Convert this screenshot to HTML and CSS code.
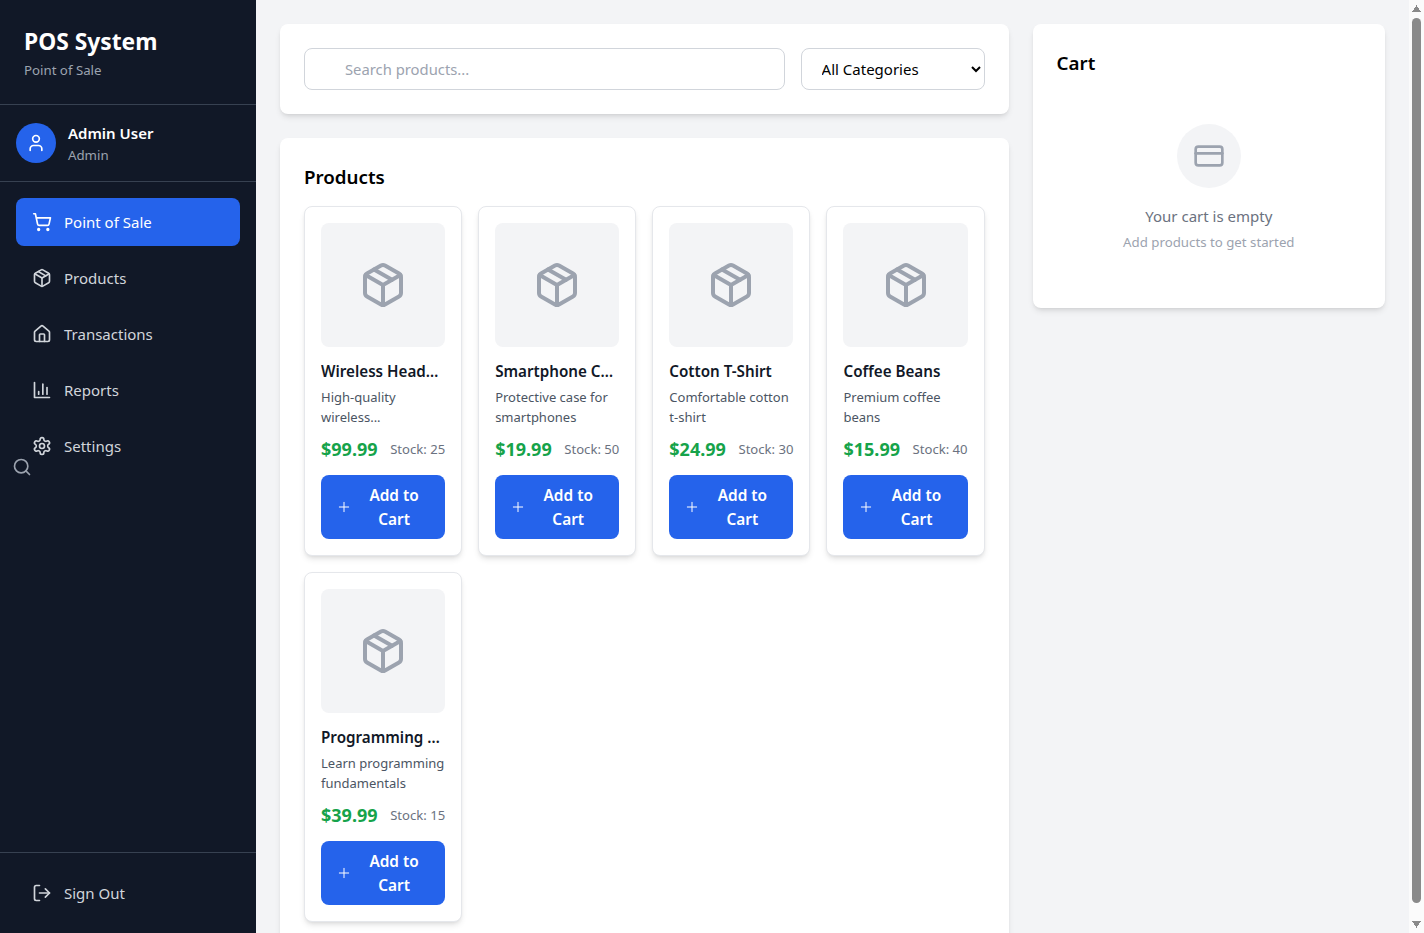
FILE: index.html
```html
<!DOCTYPE html>
<html lang="en">
<head>
<meta charset="utf-8">
<title>POS System</title>
<link rel="stylesheet" href="styles.css">
</head>
<body>
<svg class="sprite" aria-hidden="true">
  <symbol id="i-package" viewBox="0 0 24 24"><path d="m7.5 4.27 9 5.15"/><path d="M21 8a2 2 0 0 0-1-1.73l-7-4a2 2 0 0 0-2 0l-7 4A2 2 0 0 0 3 8v8a2 2 0 0 0 1 1.73l7 4a2 2 0 0 0 2 0l7-4A2 2 0 0 0 21 16Z"/><path d="m3.3 7 8.7 5 8.7-5"/><path d="M12 22V12"/></symbol>
  <symbol id="i-plus" viewBox="0 0 24 24"><path d="M5 12h14"/><path d="M12 5v14"/></symbol>
</svg>
<div class="app">
  <aside class="sidebar">
    <svg class="icon stray-search" viewBox="0 0 24 24"><circle cx="11" cy="11" r="8"/><path d="m21 21-4.3-4.3"/></svg>
    <header class="brand">
      <h1>POS System</h1>
      <p>Point of Sale</p>
    </header>
    <div class="user">
      <div class="avatar"><svg class="icon" viewBox="0 0 24 24"><path d="M19 21v-2a4 4 0 0 0-4-4H9a4 4 0 0 0-4 4v2"/><circle cx="12" cy="7" r="4"/></svg></div>
      <div>
        <div class="user-name">Admin User</div>
        <div class="user-role">Admin</div>
      </div>
    </div>
    <nav class="nav">
      <a class="nav-item active"><svg class="icon" viewBox="0 0 24 24"><circle cx="8" cy="21" r="1"/><circle cx="19" cy="21" r="1"/><path d="M2.05 2.05h2l2.66 12.42a2 2 0 0 0 2 1.58h9.78a2 2 0 0 0 1.95-1.57l1.65-7.43H5.12"/></svg>Point of Sale</a>
      <a class="nav-item"><svg class="icon"><use href="#i-package"/></svg>Products</a>
      <a class="nav-item"><svg class="icon" viewBox="0 0 24 24"><path d="M15 21v-8a1 1 0 0 0-1-1h-4a1 1 0 0 0-1 1v8"/><path d="M3 10a2 2 0 0 1 .709-1.528l7-5.999a2 2 0 0 1 2.582 0l7 5.999A2 2 0 0 1 21 10v9a2 2 0 0 1-2 2H5a2 2 0 0 1-2-2z"/></svg>Transactions</a>
      <a class="nav-item"><svg class="icon" viewBox="0 0 24 24"><path d="M3 3v18h18"/><path d="M18 17V9"/><path d="M13 17V5"/><path d="M8 17v-3"/></svg>Reports</a>
      <a class="nav-item"><svg class="icon" viewBox="0 0 24 24"><path d="M12.22 2h-.44a2 2 0 0 0-2 2v.18a2 2 0 0 1-1 1.73l-.43.25a2 2 0 0 1-2 0l-.15-.08a2 2 0 0 0-2.73.73l-.22.38a2 2 0 0 0 .73 2.73l.15.1a2 2 0 0 1 1 1.72v.51a2 2 0 0 1-1 1.74l-.15.09a2 2 0 0 0-.73 2.73l.22.38a2 2 0 0 0 2.73.73l.15-.08a2 2 0 0 1 2 0l.43.25a2 2 0 0 1 1 1.73V20a2 2 0 0 0 2 2h.44a2 2 0 0 0 2-2v-.18a2 2 0 0 1 1-1.73l.43-.25a2 2 0 0 1 2 0l.15.08a2 2 0 0 0 2.73-.73l.22-.39a2 2 0 0 0-.73-2.73l-.15-.08a2 2 0 0 1-1-1.74v-.5a2 2 0 0 1 1-1.74l.15-.09a2 2 0 0 0 .73-2.73l-.22-.38a2 2 0 0 0-2.73-.73l-.15.08a2 2 0 0 1-2 0l-.43-.25a2 2 0 0 1-1-1.73V4a2 2 0 0 0-2-2z"/><circle cx="12" cy="12" r="3"/></svg>Settings</a>
    </nav>
    <div class="sidebar-foot">
      <a class="nav-item"><svg class="icon" viewBox="0 0 24 24"><path d="M9 21H5a2 2 0 0 1-2-2V5a2 2 0 0 1 2-2h4"/><path d="m16 17 5-5-5-5"/><path d="M21 12H9"/></svg>Sign Out</a>
    </div>
  </aside>

  <main class="main">
    <div class="left">
      <section class="card filters">
        <input class="search" type="text" placeholder="Search products...">
        <select class="category"><option>All Categories</option></select>
      </section>
      <section class="card products">
        <h2>Products</h2>
        <div class="grid">
          <article class="product">
            <div class="thumb"><svg class="icon"><use href="#i-package"/></svg></div>
            <h3>Wireless Headphones</h3>
            <p class="desc">High-quality wireless...</p>
            <div class="meta"><span class="price">$99.99</span><span class="stock">Stock: 25</span></div>
            <button class="add"><svg class="icon"><use href="#i-plus"/></svg><span>Add to Cart</span></button>
          </article>
          <article class="product">
            <div class="thumb"><svg class="icon"><use href="#i-package"/></svg></div>
            <h3>Smartphone Case</h3>
            <p class="desc">Protective case for smartphones</p>
            <div class="meta"><span class="price">$19.99</span><span class="stock">Stock: 50</span></div>
            <button class="add"><svg class="icon"><use href="#i-plus"/></svg><span>Add to Cart</span></button>
          </article>
          <article class="product">
            <div class="thumb"><svg class="icon"><use href="#i-package"/></svg></div>
            <h3>Cotton T-Shirt</h3>
            <p class="desc">Comfortable cotton t-shirt</p>
            <div class="meta"><span class="price">$24.99</span><span class="stock">Stock: 30</span></div>
            <button class="add"><svg class="icon"><use href="#i-plus"/></svg><span>Add to Cart</span></button>
          </article>
          <article class="product">
            <div class="thumb"><svg class="icon"><use href="#i-package"/></svg></div>
            <h3>Coffee Beans</h3>
            <p class="desc">Premium coffee beans</p>
            <div class="meta"><span class="price">$15.99</span><span class="stock">Stock: 40</span></div>
            <button class="add"><svg class="icon"><use href="#i-plus"/></svg><span>Add to Cart</span></button>
          </article>
          <article class="product">
            <div class="thumb"><svg class="icon"><use href="#i-package"/></svg></div>
            <h3>Programming Book</h3>
            <p class="desc">Learn programming fundamentals</p>
            <div class="meta"><span class="price">$39.99</span><span class="stock">Stock: 15</span></div>
            <button class="add"><svg class="icon"><use href="#i-plus"/></svg><span>Add to Cart</span></button>
          </article>
        </div>
      </section>
    </div>
    <aside class="card cart">
      <h2>Cart</h2>
      <div class="empty">
        <div class="empty-circle"><svg class="icon" viewBox="0 0 24 24"><rect width="20" height="14" x="2" y="5" rx="2"/><line x1="2" x2="22" y1="10" y2="10"/></svg></div>
        <p class="empty-title">Your cart is empty</p>
        <p class="empty-sub">Add products to get started</p>
      </div>
    </aside>
  </main>

  <div class="scrollbar" aria-hidden="true">
    <div class="arrow arrow-up"></div>
    <div class="track"><div class="thumb-bar"></div></div>
    <div class="arrow arrow-down"></div>
  </div>
</div>
</body>
</html>
```

FILE: styles.css
```css
* { box-sizing: border-box; }
html, body { height: 100%; overflow: hidden; }
body { margin: 0; background: #f3f4f6; font-family: "Noto Sans", "Liberation Sans", sans-serif; font-size: 15px; line-height: 24px; color: #000; }
h1, h2, h3, p { margin: 0; }
.sprite { display: none; }
.icon { display: block; flex: none; fill: none; stroke: currentColor; stroke-width: 2; stroke-linecap: round; stroke-linejoin: round; width: 20px; height: 20px; }

.app { display: flex; align-items: flex-start; height: 100vh; overflow: hidden; }

.scrollbar { flex: none; width: 15px; height: 100vh; background: #fbfbfb; display: flex; flex-direction: column; align-items: center; }
.arrow { flex: none; width: 9px; height: 17px; }
.arrow-up { background: conic-gradient(from 147deg at 50% 0, #8a8a8a 66deg, transparent 0) 0 5px / 9px 7px no-repeat; }
.arrow-down { background: conic-gradient(from 327deg at 50% 100%, #8a8a8a 66deg, transparent 0) 0 5px / 9px 7px no-repeat; }
.track { flex: 1; width: 9px; padding-top: 1px; }
.thumb-bar { height: 885px; background: #8a8a8a; border-radius: 5px; }

.sidebar { position: relative; flex: none; width: 256px; height: 100vh; background: #111827; color: #fff; display: flex; flex-direction: column; }
.stray-search { position: absolute; left: 12px; top: 50%; transform: translateY(-50%); color: #9ca3af; }
.brand { padding: 24px; border-bottom: 1px solid #374151; }
.brand h1 { font-size: 22.8px; line-height: 36px; font-weight: 700; }
.brand p { font-size: 13.25px; line-height: 20px; color: #9ca3af; }
.user { display: flex; align-items: center; gap: 12px; padding: 16px; border-bottom: 1px solid #374151; }
.avatar { width: 40px; height: 40px; border-radius: 50%; background: #2563eb; display: flex; align-items: center; justify-content: center; }
.user-name { font-weight: 600; }
.user-role { font-size: 13.25px; line-height: 20px; color: #9ca3af; }
.nav { flex: 1; padding: 16px; display: flex; flex-direction: column; gap: 8px; }
.nav-item { display: flex; align-items: center; gap: 12px; padding: 12px 16px; border-radius: 8px; color: #d1d5db; }
.nav-item.active { background: #2563eb; color: #fff; }
.sidebar-foot { padding: 16px; border-top: 1px solid #374151; }

.main { flex: 1; min-width: 0; display: grid; grid-template-columns: minmax(0, 1fr) 352.4px; gap: 24px; align-items: start; padding: 24px 24px 0; }
.left { display: flex; flex-direction: column; gap: 24px; }
.card { background: #fff; border-radius: 8px; padding: 24px; box-shadow: 0 4px 6px -1px rgba(0,0,0,.1), 0 2px 4px -2px rgba(0,0,0,.1); }
.filters { display: flex; gap: 16px; }
.search { flex: 1; min-width: 0; height: 42px; padding: 8px 16px 8px 40px; border: 1px solid #d1d5db; border-radius: 8px; font: inherit; font-size: 14.8px; background: #fff; }
.search::placeholder { color: #9ca3af; opacity: 1; }
.category { flex: none; width: 184px; height: 42px; padding: 8px 16px; border: 1px solid #d1d5db; border-radius: 8px; font: inherit; background: #fff; color: #000; }
h2 { font-size: 18.75px; line-height: 30px; font-weight: 600; margin-bottom: 14px; }
.grid { display: grid; grid-template-columns: repeat(4, minmax(0, 1fr)); gap: 16px; }
.product { border: 1px solid #e5e7eb; border-radius: 8px; padding: 16px; background: #fff; box-shadow: 0 4px 6px -1px rgba(0,0,0,.1), 0 2px 4px -2px rgba(0,0,0,.1); }
.thumb { height: 124px; margin-bottom: 12px; background: #f3f4f6; border-radius: 8px; color: #9ca3af; display: flex; align-items: center; justify-content: center; }
.thumb .icon { width: 48px; height: 48px; }
h3 { font-size: 15.2px; line-height: 24px; font-weight: 600; color: #111827; white-space: nowrap; overflow: hidden; text-overflow: ellipsis; margin-bottom: 4px; }
.desc { font-size: 13px; line-height: 20px; color: #4b5563; margin-bottom: 8px; height: 40px; }
.meta { display: flex; align-items: center; justify-content: space-between; margin-bottom: 12px; }
.price { font-size: 18px; line-height: 28px; font-weight: 700; color: #16a34a; }
.stock { font-size: 13.1px; line-height: 20px; color: #6b7280; }
.add { width: 100%; display: flex; align-items: center; justify-content: center; gap: 8px; padding: 9px 17px 7px 15px; border: 0; border-radius: 8px; background: #2563eb; color: #fff; font: inherit; font-size: 15.4px; font-weight: 600; }
.add .icon { width: 16px; height: 16px; stroke-width: 1.5; position: relative; top: -1px; }

.empty { padding: 32px 0; display: flex; flex-direction: column; align-items: center; text-align: center; }
.empty-circle { width: 64px; height: 64px; border-radius: 50%; background: #f3f4f6; color: #9ca3af; display: flex; align-items: center; justify-content: center; margin-bottom: 16px; }
.empty-circle .icon { width: 32px; height: 32px; }
.empty-title { color: #6b7280; margin-bottom: 4px; }
.empty-sub { font-size: 13.25px; line-height: 20px; color: #9ca3af; }
```
